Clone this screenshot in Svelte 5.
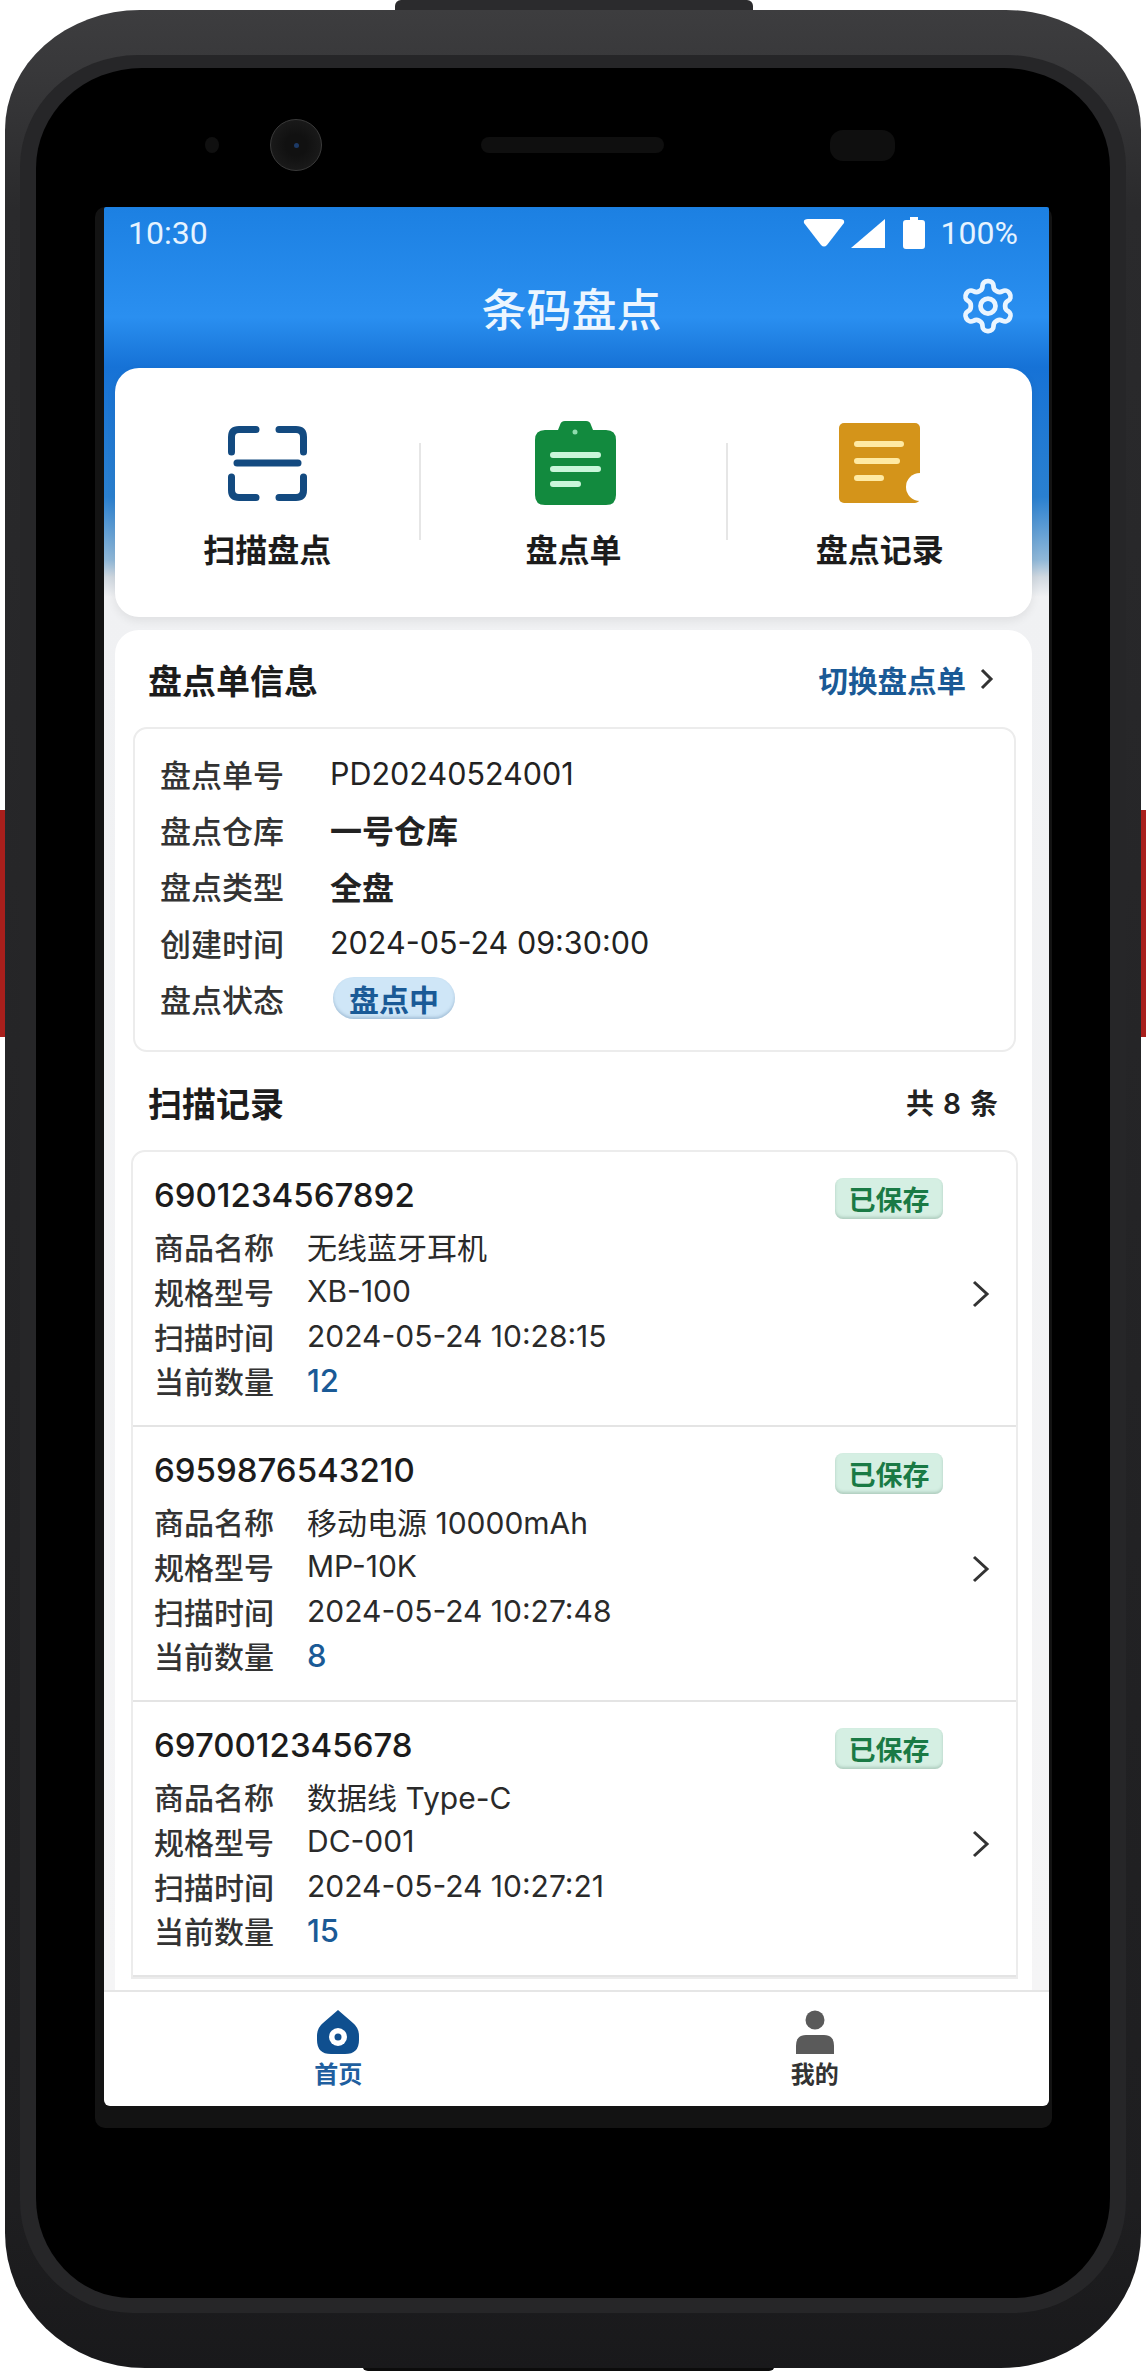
<script>
  const info = [
    { label: "盘点单号", value: "PD20240524001" },
    { label: "盘点仓库", value: "一号仓库", strong: true },
    { label: "盘点类型", value: "全盘", strong: true },
    { label: "创建时间", value: "2024-05-24 09:30:00" },
  ];

  const records = [
    { code: "6901234567892", name: "无线蓝牙耳机", model: "XB-100", time: "2024-05-24 10:28:15", qty: 12 },
    { code: "6959876543210", name: "移动电源 10000mAh", model: "MP-10K", time: "2024-05-24 10:27:48", qty: 8 },
    { code: "6970012345678", name: "数据线 Type-C", model: "DC-001", time: "2024-05-24 10:27:21", qty: 15 },
  ];
</script>

<div class="phone">
  <span class="bump top"></span>
  <span class="bump bottom"></span>
  <span class="side left"></span>
  <span class="side right"></span>

  <div class="body">
    <div class="ring">
      <div class="glass">
        <div class="sensors">
          <span class="dot"></span>
          <span class="camera"><i></i></span>
          <span class="speaker"></span>
          <span class="prox"></span>
        </div>

        <div class="panel">
          <div class="screen">
            <div class="main">
              <div class="status">
                <span class="time">10:30</span>
                <div class="status-right">
                  <svg width="42" height="28" viewBox="0 0 42 28"><path d="M5 0h32q5 0 4 4L24 26q-3 3-6 0L1 4Q0 0 5 0z" fill="#fff" /></svg>
                  <svg width="34" height="29" viewBox="0 0 34 29"><path d="M34 0v29H0z" fill="#fff" /></svg>
                  <svg class="batt" width="22" height="32" viewBox="0 0 22 32"><path d="M7 0h8v3h4q3 0 3 3v23q0 3-3 3H3q-3 0-3-3V6q0-3 3-3h4z" fill="#fff" /></svg>
                  <span class="pct">100%</span>
                </div>
              </div>

              <div class="title-row">
                <h1>条码盘点</h1>
                <svg class="gear" width="60" height="60" viewBox="0 0 24 24" fill="none" stroke="#eaf5ff" stroke-width="1.9" stroke-linejoin="round">
                  <path d="M12.22 2h-.44a2 2 0 0 0-2 2v.18a2 2 0 0 1-1 1.73l-.43.25a2 2 0 0 1-2 0l-.15-.08a2 2 0 0 0-2.73.73l-.22.38a2 2 0 0 0 .73 2.73l.15.1a2 2 0 0 1 1 1.72v.51a2 2 0 0 1-1 1.74l-.15.09a2 2 0 0 0-.73 2.73l.22.38a2 2 0 0 0 2.73.73l.15-.08a2 2 0 0 1 2 0l.43.25a2 2 0 0 1 1 1.73V20a2 2 0 0 0 2 2h.44a2 2 0 0 0 2-2v-.18a2 2 0 0 1 1-1.73l.43-.25a2 2 0 0 1 2 0l.15.08a2 2 0 0 0 2.73-.73l.22-.39a2 2 0 0 0-.73-2.73l-.15-.08a2 2 0 0 1-1-1.74v-.5a2 2 0 0 1 1-1.74l.15-.09a2 2 0 0 0 .73-2.73l-.22-.38a2 2 0 0 0-2.73-.73l-.15.08a2 2 0 0 1-2 0l-.43-.25a2 2 0 0 1-1-1.73V4a2 2 0 0 0-2-2z" />
                  <circle cx="12" cy="12" r="3" />
                </svg>
              </div>

              <div class="actions">
                <div class="action">
                  <div class="action-icon">
                    <svg width="79" height="75" viewBox="0 0 79 75" fill="none" stroke="#134a80" stroke-width="7" stroke-linecap="round">
                      <path d="M3.500 26V11q0-7.500 7.500-7.500h17M51 3.500h17q7.500 0 7.500 7.500v15M3.500 51v13q0 7.500 7.500 7.500h17M75.500 51v13q0 7.500-7.500 7.500H51" />
                      <path d="M9 37h61" />
                    </svg>
                  </div>
                  <span>扫描盘点</span>
                </div>
                <i class="vline"></i>
                <div class="action">
                  <div class="action-icon clip">
                    <svg width="81" height="84" viewBox="0 0 81 84">
                      <path d="M30 0h21q4 0 5 4l2 5h13q10 0 10 10v55q0 10-10 10H10Q0 84 0 74V19Q0 9 10 9h13l2-5q1-4 5-4z" fill="#128a3e" />
                      <circle cx="40" cy="11" r="2.500" fill="#8fdcae" />
                      <path d="M18 34h45M18 48h45M18 63h25" stroke="#c9f6da" stroke-width="6" stroke-linecap="round" />
                    </svg>
                  </div>
                  <span>盘点单</span>
                </div>
                <i class="vline"></i>
                <div class="action">
                  <div class="action-icon">
                    <svg width="81" height="80" viewBox="0 0 81 80">
                      <rect width="81" height="80" rx="5" fill="#d4941a" />
                      <circle cx="81" cy="64" r="14" fill="#fff" />
                      <path d="M18 21h44M18 38h40M18 55h24" stroke="#ffeaa3" stroke-width="6" stroke-linecap="round" />
                    </svg>
                  </div>
                  <span>盘点记录</span>
                </div>
              </div>

              <div class="sheet">
                <div class="sheet-head">
                  <h2>盘点单信息</h2>
                  <div class="switch">
                    切换盘点单
                    <svg width="14" height="22" viewBox="0 0 14 22" fill="none" stroke="#333" stroke-width="3"><path d="M2 2l9 9-9 9" /></svg>
                  </div>
                </div>

                <div class="info">
                  {#each info as row}
                    <div class="info-row">
                      <span class="info-label">{row.label}</span>
                      <span class:strong={row.strong}>{row.value}</span>
                    </div>
                  {/each}
                  <div class="info-row">
                    <span class="info-label">盘点状态</span>
                    <span class="pill">盘点中</span>
                  </div>
                </div>

                <div class="sheet-head scans">
                  <h2>扫描记录</h2>
                  <span class="count">共 8 条</span>
                </div>

                <div class="list">
                  {#each records as rec}
                    <div class="record">
                      <div class="record-body">
                        <div class="record-top">
                          <span class="code">{rec.code}</span>
                          <span class="saved">已保存</span>
                        </div>
                        <div class="line"><span class="line-label">商品名称</span>{rec.name}</div>
                        <div class="line"><span class="line-label">规格型号</span>{rec.model}</div>
                        <div class="line"><span class="line-label">扫描时间</span>{rec.time}</div>
                        <div class="line"><span class="line-label">当前数量</span><b>{rec.qty}</b></div>
                      </div>
                      <svg class="chev" width="20" height="28" viewBox="0 0 20 28" fill="none" stroke="#333" stroke-width="3"><path d="M3 2l13 12L3 26" /></svg>
                    </div>
                  {/each}
                </div>
              </div>
            </div>

            <nav class="tabs">
              <div class="tab on">
                <svg width="42" height="44" viewBox="0 0 42 44">
                  <path d="M21 0l15 13q6 5 6 13v4q0 14-14 14H14Q0 44 0 30v-4q0-8 6-13z" fill="#0f4f8f" />
                  <circle cx="21" cy="27" r="9" fill="#fff" />
                  <circle cx="21" cy="27" r="3.500" fill="#0f4f8f" />
                </svg>
                <span>首页</span>
              </div>
              <div class="tab">
                <svg width="40" height="44" viewBox="0 0 40 44" fill="#5a5a5a">
                  <circle cx="20" cy="10" r="9.500" />
                  <path d="M1 44V36q0-11 10-11h18q10 0 10 11v8z" />
                </svg>
                <span>我的</span>
              </div>
            </nav>
          </div>
        </div>
      </div>
    </div>
  </div>
</div>

<style>
  :global(body) {
    background: #fff;
  }

  .phone {
    position: relative;
    box-sizing: border-box;
    width: 1146px;
    height: 2371px;
    padding: 10px 5px 3px 5px;
    background: #fff;
    font-family: Inter, "Noto Sans CJK SC", sans-serif;
    color: #222;
    overflow: hidden;
  }

  .bump {
    position: absolute;
    height: 14px;
  }
  .bump.top {
    left: 395px;
    width: 358px;
    top: 0;
    background: #2b2b2d;
    border-radius: 6px 6px 0 0;
  }
  .bump.bottom {
    left: 362px;
    width: 413px;
    bottom: 0;
    background: #0c0c0c;
    border-radius: 0 0 6px 6px;
  }

  .side {
    position: absolute;
    top: 810px;
    width: 5px;
    height: 227px;
    background: #a81f1c;
  }
  .side.left {
    left: 0;
  }
  .side.right {
    right: 0;
  }

  .body {
    position: relative;
    box-sizing: border-box;
    height: 100%;
    padding: 45px 15px 55px 15px;
    background: linear-gradient(#3d3d3f 0, #38383a 60px, #2a2a2c 200px, #1e1e20 2200px, #19191b 100%);
    border-radius: 135px 135px 140px 140px / 120px 120px 135px 135px;
  }

  .ring {
    box-sizing: border-box;
    height: 100%;
    padding: 13px 16px 15px 16px;
    background: #262628;
    border-radius: 118px 118px 112px 112px / 112px 112px 112px 112px;
  }

  .glass {
    box-sizing: border-box;
    height: 100%;
    padding: 0 58px 0 59px;
    background: #000;
    border-radius: 106px 106px 95px 95px / 100px 100px 100px 100px;
  }

  .sensors {
    position: relative;
    display: flex;
    align-items: center;
    height: 139px;
    padding: 15px 0 0 110px;
    box-sizing: border-box;
  }
  .dot {
    width: 14px;
    height: 16px;
    border-radius: 50%;
    background: #101010;
    margin-right: 51px;
  }
  .camera {
    display: flex;
    align-items: center;
    justify-content: center;
    width: 50px;
    height: 50px;
    border-radius: 50%;
    background: radial-gradient(#111 30%, #1b1b1b 80%);
    border: 1px solid #3a3a3a;
    margin-right: 159px;
  }
  .camera i {
    width: 5px;
    height: 5px;
    border-radius: 50%;
    background: #1d3a66;
  }
  .speaker {
    width: 183px;
    height: 16px;
    border-radius: 8px;
    background: #0f0f0f;
    margin-right: 166px;
  }
  .prox {
    width: 65px;
    height: 31px;
    border-radius: 13px;
    background: #0f0f0f;
  }

  .panel {
    box-sizing: border-box;
    height: 1921px;
    padding: 0 3px 22px 9px;
    background: #131313;
    border-radius: 10px;
  }

  .screen {
    display: flex;
    flex-direction: column;
    height: 100%;
    overflow: hidden;
    border-radius: 2px 2px 6px 6px;
  }

  .main {
    flex: 1;
    min-height: 0;
    overflow: hidden;
    background: linear-gradient(
      #1c80e2 0,
      #2a8ff0 110px,
      #1672d6 160px,
      #2a80d0 290px,
      #90b8d8 353px,
      #d0d8e0 370px,
      #f0f1f3 390px,
      #f5f5f6 100%
    );
  }

  .status {
    display: flex;
    align-items: center;
    justify-content: space-between;
    height: 52px;
    padding: 0 31px 0 24px;
    color: #e6f3ff;
    font-family: Roboto, sans-serif;
    font-size: 32px;
  }
  .status-right {
    display: flex;
    align-items: center;
  }
  .status-right svg {
    margin-right: 6px;
  }
  .status-right svg.batt {
    margin: 0 16px 0 12px;
  }

  .title-row {
    position: relative;
    display: flex;
    align-items: center;
    justify-content: center;
    height: 96px;
    padding-right: 10px;
  }
  h1 {
    margin: 0;
    font-size: 45px;
    font-weight: 500;
    color: #ecf6ff;
  }
  .gear {
    position: absolute;
    right: 31px;
    top: 17px;
  }

  .actions {
    display: flex;
    align-items: flex-start;
    box-sizing: border-box;
    height: 249px;
    margin: 13px 17px 13px 11px;
    background: #fff;
    border-radius: 24px;
    box-shadow: 0 4px 10px rgba(0, 0, 0, 0.07);
  }
  .action {
    flex: 1;
    display: flex;
    flex-direction: column;
    align-items: center;
    padding-top: 53px;
    font-size: 32px;
    font-weight: 700;
    line-height: 38px;
    color: #1c1c1c;
  }
  .action-icon {
    display: flex;
    align-items: center;
    justify-content: center;
    height: 84px;
    margin-bottom: 27px;
  }
  .action-icon.clip {
    padding-left: 4px;
  }
  .vline {
    width: 2px;
    height: 97px;
    margin-top: 75px;
    background: #e6e6e6;
  }

  .sheet {
    box-sizing: border-box;
    height: 1400px;
    margin: 0 17px 0 11px;
    padding-top: 29px;
    background: #fff;
    border-radius: 24px 24px 0 0;
  }
  .sheet-head {
    display: flex;
    align-items: center;
    justify-content: space-between;
    height: 40px;
    padding: 0 38px 0 33px;
  }
  h2 {
    margin: 0;
    font-size: 34px;
    font-weight: 700;
    color: #1c1c1c;
  }
  .switch {
    display: flex;
    align-items: center;
    gap: 14px;
    font-size: 29.5px;
    font-weight: 600;
    color: #1a5a96;
  }

  .info {
    box-sizing: border-box;
    height: 325px;
    margin: 28px 16px 30px 18px;
    padding: 16px 0 0 25px;
    border: 2px solid #ececec;
    border-radius: 14px;
  }
  .info-row {
    display: flex;
    align-items: center;
    height: 56.3px;
    font-size: 30.5px;
    color: #222;
  }
  .info-label {
    width: 170px;
    font-size: 31px;
    font-weight: 500;
    color: #333;
  }
  .strong {
    font-size: 32px;
    font-weight: 600;
  }
  .pill {
    display: flex;
    align-items: center;
    justify-content: center;
    width: 122px;
    height: 42px;
    margin-left: 3px;
    border-radius: 21px;
    background: #cfe6f7;
    box-shadow: inset 0 -2px 3px rgba(70, 110, 150, 0.3);
    font-size: 30px;
    font-weight: 700;
    color: #1a5a96;
  }

  .scans {
    padding-right: 34px;
  }
  .count {
    font-size: 28px;
    font-weight: 600;
    word-spacing: 2px;
    color: #222;
  }

  .list {
    margin: 28px 14px 0 16px;
    border: 2px solid #ececec;
    border-radius: 14px 14px 0 0;
  }
  .record {
    box-sizing: border-box;
    display: flex;
    align-items: center;
    height: 275px;
    padding: 21px 25px 0 21px;
    border-bottom: 2px solid #e4e4e4;
  }
  .record-body {
    flex: 1;
    align-self: flex-start;
  }
  .record-top {
    display: flex;
    align-items: center;
    justify-content: space-between;
    height: 44px;
    margin-bottom: 7px;
  }
  .code {
    font-size: 33px;
    font-weight: 500;
    color: #1c1c1c;
  }
  .saved {
    display: flex;
    align-items: center;
    justify-content: center;
    width: 108px;
    height: 41px;
    margin: 7px -2px 0 0;
    border-radius: 8px;
    background: #d5efe3;
    box-shadow: inset 0 -2px 3px rgba(90, 130, 110, 0.3);
    font-size: 27px;
    font-weight: 700;
    color: #1a7a45;
  }
  .line {
    display: flex;
    align-items: center;
    height: 44.7px;
    font-size: 30px;
    color: #2a2a2a;
  }
  .line-label {
    width: 153px;
    font-size: 30px;
    font-weight: 500;
    color: #333;
  }
  .line b {
    font-size: 31px;
    font-weight: 500;
    color: #1a5a96;
  }
  .chev {
    margin: -10px 0 0 30px;
    flex-shrink: 0;
  }

  .tabs {
    display: flex;
    flex-shrink: 0;
    height: 116px;
    box-sizing: border-box;
    padding-top: 18px;
    background: #fff;
    border-top: 2px solid #e6e6e6;
  }
  .tab {
    flex: 1;
    display: flex;
    flex-direction: column;
    align-items: center;
    gap: 6px;
    font-size: 24px;
    font-weight: 700;
    line-height: 30px;
    color: #333;
  }
  .tab.on {
    color: #1f5f9f;
    padding-right: 8px;
  }
</style>
